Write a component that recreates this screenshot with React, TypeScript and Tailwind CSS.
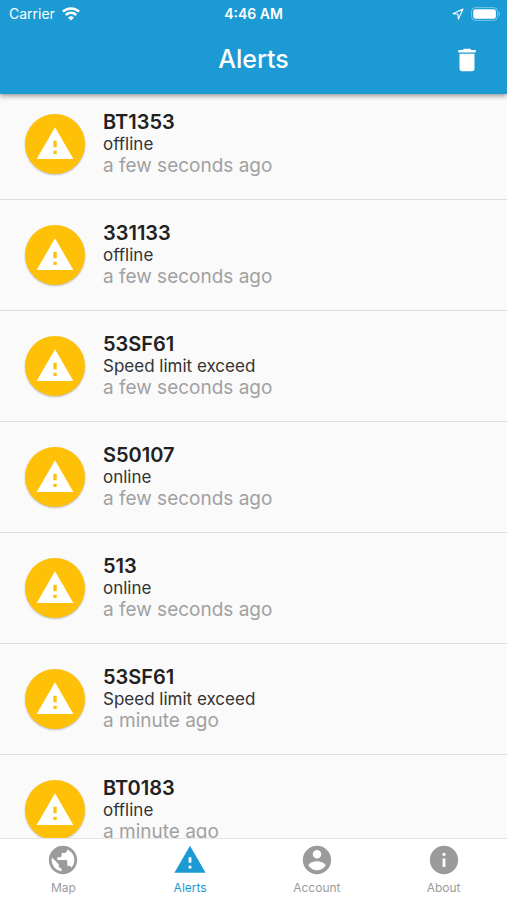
import type { ReactNode } from "react";

const PATHS = {
  warning: "M1 21h22L12 2 1 21zm12-3h-2v-2h2v2zm0-4h-2v-4h2v4z",
  trash: "M6 19c0 1.1.9 2 2 2h8c1.1 0 2-.9 2-2V7H6v12zM19 4h-3.5l-1-1h-5l-1 1H5v2h14V4z",
  globe:
    "M12 2C6.48 2 2 6.48 2 12s4.48 10 10 10 10-4.48 10-10S17.52 2 12 2zm-1 17.93c-3.95-.49-7-3.85-7-7.93 0-.62.08-1.21.21-1.79L9 15v1c0 1.1.9 2 2 2v1.93zm6.9-2.54c-.26-.81-1-1.39-1.9-1.39h-1v-3c0-.55-.45-1-1-1H8v-2h2c.55 0 1-.45 1-1V7h2c1.1 0 2-.9 2-2v-.41c2.93 1.19 5 4.06 5 7.41 0 2.08-.8 3.97-2.1 5.39z",
  account:
    "M12 2C6.48 2 2 6.48 2 12s4.48 10 10 10 10-4.48 10-10S17.52 2 12 2zm0 3c1.66 0 3 1.34 3 3s-1.34 3-3 3-3-1.34-3-3 1.34-3 3-3zm0 14.2c-2.5 0-4.71-1.28-6-3.22.03-1.99 4-3.08 6-3.08 1.99 0 5.97 1.09 6 3.08-1.29 1.94-3.5 3.22-6 3.22z",
  info: "M12 2C6.48 2 2 6.48 2 12s4.48 10 10 10 10-4.48 10-10S17.52 2 12 2zm1 15h-2v-6h2v6zm0-8h-2V7h2v2z",
};

type IconName = keyof typeof PATHS;

function Icon({ name, className }: { name: IconName; className: string }) {
  return (
    <svg viewBox="0 0 24 24" fill="currentColor" aria-hidden="true" className={className}>
      <path d={PATHS[name]} />
    </svg>
  );
}

const alerts = [
  { device: "BT1353", message: "offline", time: "a few seconds ago" },
  { device: "331133", message: "offline", time: "a few seconds ago" },
  { device: "53SF61", message: "Speed limit exceed", time: "a few seconds ago" },
  { device: "S50107", message: "online", time: "a few seconds ago" },
  { device: "513", message: "online", time: "a few seconds ago" },
  { device: "53SF61", message: "Speed limit exceed", time: "a minute ago" },
  { device: "BT0183", message: "offline", time: "a minute ago" },
];

const tabs: { label: string; icon: IconName; active?: boolean }[] = [
  { label: "Map", icon: "globe" },
  { label: "Alerts", icon: "warning", active: true },
  { label: "Account", icon: "account" },
  { label: "About", icon: "info" },
];

function StatusBar() {
  return (
    <div className="grid h-7 grid-cols-[1fr_auto_1fr] items-center px-1.5 text-sm">
      <div className="flex items-center gap-[7px] pl-[3px]">
        <span>Carrier</span>
        <svg viewBox="0 0 18 14" className="h-3.5 w-[18px]" fill="none" stroke="currentColor" strokeWidth="2.5" aria-hidden="true">
          <path d="M0.9 4.7a11.6 11.6 0 0 1 16.2 0" />
          <path d="M3.8 8a7.4 7.4 0 0 1 10.4 0" />
          <path d="M9 13.6 6.1 10.7a4.1 4.1 0 0 1 5.8 0z" fill="currentColor" stroke="none" />
        </svg>
      </div>
      <span className="text-center font-semibold">4:46 AM</span>
      <div className="flex items-center justify-end gap-[7px]">
        <svg viewBox="0 0 12 12" className="h-3 w-3" fill="none" stroke="currentColor" strokeWidth="1.1" strokeLinejoin="round" aria-hidden="true">
          <path d="M11 1 1 5.8l4.9.4.5 4.9z" />
        </svg>
        <svg viewBox="0 0 30 14" className="h-3.5 w-[30px]" fill="currentColor" aria-hidden="true">
          <rect x="0.6" y="0.6" width="26" height="12.8" rx="3.8" fill="none" stroke="currentColor" strokeOpacity="0.4" />
          <rect x="2.3" y="2.3" width="22.6" height="9.4" rx="2.2" />
          <path d="M27.8 4.8v4.4c1.7-.7 1.7-3.7 0-4.4z" opacity="0.45" />
        </svg>
      </div>
    </div>
  );
}

function AlertRow({ device, message, children }: { device: string; message: string; children: ReactNode }) {
  return (
    <li className="flex items-center gap-[18px] border-b border-[#dcdcdc] p-[25px]">
      <span className="flex size-[60px] shrink-0 items-center justify-center rounded-full bg-[#ffc107] text-white shadow-[0_1px_2px_rgba(0,0,0,0.25)]">
        <Icon name="warning" className="size-10" />
      </span>
      <div className="-my-1 min-w-0">
        <h2 className="text-xl leading-[22px] font-semibold text-[#212121]">{device}</h2>
        <p className="text-[17px] leading-[22px] text-[#333333]">{message}</p>
        <p className="text-[19px] leading-[22px] text-[#a1a1a1]">{children}</p>
      </div>
    </li>
  );
}

export default function App() {
  return (
    <div className="flex h-screen flex-col overflow-hidden bg-[#fafafa] font-['Inter','Liberation_Sans',sans-serif]">
      <header className="relative z-10 shrink-0 bg-[#1b9ad4] text-white shadow-[0_2px_5px_rgba(0,0,0,0.4)]">
        <StatusBar />
        <div className="grid h-[66px] grid-cols-[1fr_auto_1fr] items-center px-[25px] pb-0.5">
          <h1 className="col-start-2 text-[25px] font-medium">Alerts</h1>
          <button type="button" aria-label="Delete alerts" className="justify-self-end">
            <Icon name="trash" className="size-[30px]" />
          </button>
        </div>
      </header>

      <main className="min-h-0 flex-1 overflow-y-auto [scrollbar-width:none]">
        <ul className="-mt-[5px]">
          {alerts.map((alert, index) => (
            <AlertRow key={index} device={alert.device} message={alert.message}>
              {alert.time}
            </AlertRow>
          ))}
        </ul>
      </main>

      <nav className="grid shrink-0 grid-cols-4 border-t border-[#e6e6e6] bg-white py-1">
        {tabs.map((tab) => (
          <button
            key={tab.label}
            type="button"
            aria-current={tab.active ? "page" : undefined}
            className={`flex flex-col items-center gap-[3px] text-xs ${tab.active ? "text-[#1b9ad4]" : "text-[#9b9b9b]"}`}
          >
            <Icon name={tab.icon} className="size-[34px]" />
            <span>{tab.label}</span>
          </button>
        ))}
      </nav>
    </div>
  );
}
